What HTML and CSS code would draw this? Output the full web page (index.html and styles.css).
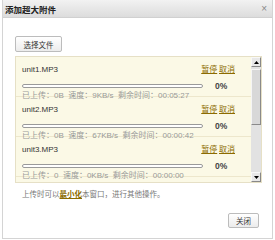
FILE: index.html
```html
<!DOCTYPE html>
<html lang="zh-CN">
<head>
<meta charset="utf-8">
<link rel="stylesheet" href="styles.css">
</head>
<body>
<div class="dialog">
  <div class="titlebar">
    <span class="title">添加超大附件</span>
    <span class="close">×</span>
  </div>
  <div class="content">
    <button class="btn btn-pick">选择文件</button>
    <div class="listbox">
      <div class="list">
        <div class="item">
          <div class="head"><span class="fname">unit1.MP3</span><span class="links"><a>暂停</a> <a>取消</a></span></div>
          <div class="prog"><span class="bar"></span><span class="pct">0%</span></div>
          <div class="status">已上传：0B&nbsp;&nbsp;速度：9KB/s&nbsp;&nbsp;剩余时间：00:05:27</div>
        </div>
        <div class="item">
          <div class="head"><span class="fname">unit2.MP3</span><span class="links"><a>暂停</a> <a>取消</a></span></div>
          <div class="prog"><span class="bar"></span><span class="pct">0%</span></div>
          <div class="status">已上传：0B&nbsp;&nbsp;速度：67KB/s&nbsp;&nbsp;剩余时间：00:00:42</div>
        </div>
        <div class="item">
          <div class="head"><span class="fname">unit3.MP3</span><span class="links"><a>暂停</a> <a>取消</a></span></div>
          <div class="prog"><span class="bar"></span><span class="pct">0%</span></div>
          <div class="status">已上传：0&nbsp;&nbsp;速度：0KB/s&nbsp;&nbsp;剩余时间：00:00:00</div>
        </div>
      </div>
      <div class="scrollbar">
        <div class="sb-btn"><svg width="5" height="3" viewBox="0 0 5 3"><path d="M0 3 L2.5 0 L5 3 Z" fill="#000"/></svg></div>
        <div class="track"><div class="thumb"></div></div>
        <div class="sb-btn"><svg width="5" height="3" viewBox="0 0 5 3"><path d="M0 0 L5 0 L2.5 3 Z" fill="#000"/></svg></div>
      </div>
    </div>
    <p class="tip">上传时可以<a class="strong">最小化</a>本窗口，进行其他操作。</p>
    <div class="actions"><button class="btn btn-close">关闭</button></div>
  </div>
</div>
</body>
</html>
```

FILE: styles.css
```css
* { box-sizing: border-box; }
html, body { margin: 0; padding: 0; background: #fff; }
body {
  font-family: "Liberation Sans", "Noto Sans CJK SC", sans-serif;
  font-size: 7.5px;
  color: #333;
}
.dialog {
  margin-left: 2px;
  width: 271px;
  height: 239px;
  border: 1px solid #d4d4d4;
  border-top: none;
  display: flex;
  flex-direction: column;
}
.titlebar {
  height: 18px;
  display: flex;
  align-items: center;
  justify-content: space-between;
  padding: 0 5px 0 2px;
  background: linear-gradient(#f2f2f2, #dcdcdc);
  border-bottom: 1px solid #d0d0d0;
}
.title {
  font-family: "Noto Sans CJK SC", sans-serif;
  font-weight: bold;
  font-size: 8.5px;
  color: #222;
  line-height: 12px;
}
.close {
  color: #888;
  font-size: 10px;
  line-height: 10px;
}
.content {
  flex: 1;
  padding: 18px 10px 0 12px;
  display: flex;
  flex-direction: column;
}
.btn {
  font-family: "Noto Sans CJK SC", sans-serif;
  font-size: 7.5px;
  color: #333;
  padding: 0;
  border: 1px solid #bcbcbc;
  border-radius: 2px;
  background: linear-gradient(#ffffff, #ececec);
  line-height: 13px;
}
.btn-pick { width: 47px; height: 16px; align-self: flex-start; }
.listbox {
  margin-top: 4px;
  height: 127px;
  border: 1px solid #e6e0c6;
  background: #fbf9e6;
  display: flex;
  overflow: hidden;
}
.list { flex: 1; overflow: hidden; }
.item {
  height: 40px;
  padding: 7px 16px 0 6px;
  border-bottom: 1px solid #ede7cc;
}
.head {
  display: flex;
  justify-content: space-between;
  align-items: flex-start;
}
.fname { line-height: 12px; color: #333; font-size: 8px; }
.links {
  font-family: "Noto Sans CJK SC", sans-serif;
  font-size: 8px;
  line-height: 10px;
}
.links a, .tip a {
  color: #8c6b00;
  text-decoration: underline;
}
.prog {
  margin-top: 5px;
  height: 10px;
  display: flex;
  align-items: center;
}
.bar {
  width: 181px;
  height: 4px;
  border: 1px solid #9a9a9a;
  border-radius: 2px;
  background: #fff;
}
.pct {
  margin-left: 12px;
  font-weight: bold;
  font-size: 8.5px;
  color: #444;
}
.status {
  line-height: 10px;
  font-size: 8px;
  color: #999;
  font-family: "Liberation Sans", "Noto Sans CJK SC", sans-serif;
  white-space: nowrap;
}
.scrollbar {
  width: 10px;
  display: flex;
  flex-direction: column;
  background: #e4e4e4;
}
.sb-btn {
  height: 10px;
  display: flex;
  align-items: center;
  justify-content: center;
  background: #e8e8e8;
  border: 1px solid #f8f8f8;
  border-right-color: #888;
  border-bottom-color: #888;
}
.track {
  flex: 1;
  padding-top: 2px;
  background: #e2e2e2;
}
.thumb {
  height: 56px;
  background: #d8d8d8;
  border: 1px solid #f5f5f5;
  border-right-color: #8a8a8a;
  border-bottom-color: #8a8a8a;
}
.tip {
  margin: 5px 0 0 7px;
  line-height: 12px;
  color: #777;
  font-family: "Noto Sans CJK SC", sans-serif;
}
.tip a.strong { font-weight: bold; }
.actions {
  margin-top: 13px;
  display: flex;
  justify-content: flex-end;
  padding-right: 3px;
}
.btn-close { width: 31px; height: 15px; line-height: 12px; }
```
